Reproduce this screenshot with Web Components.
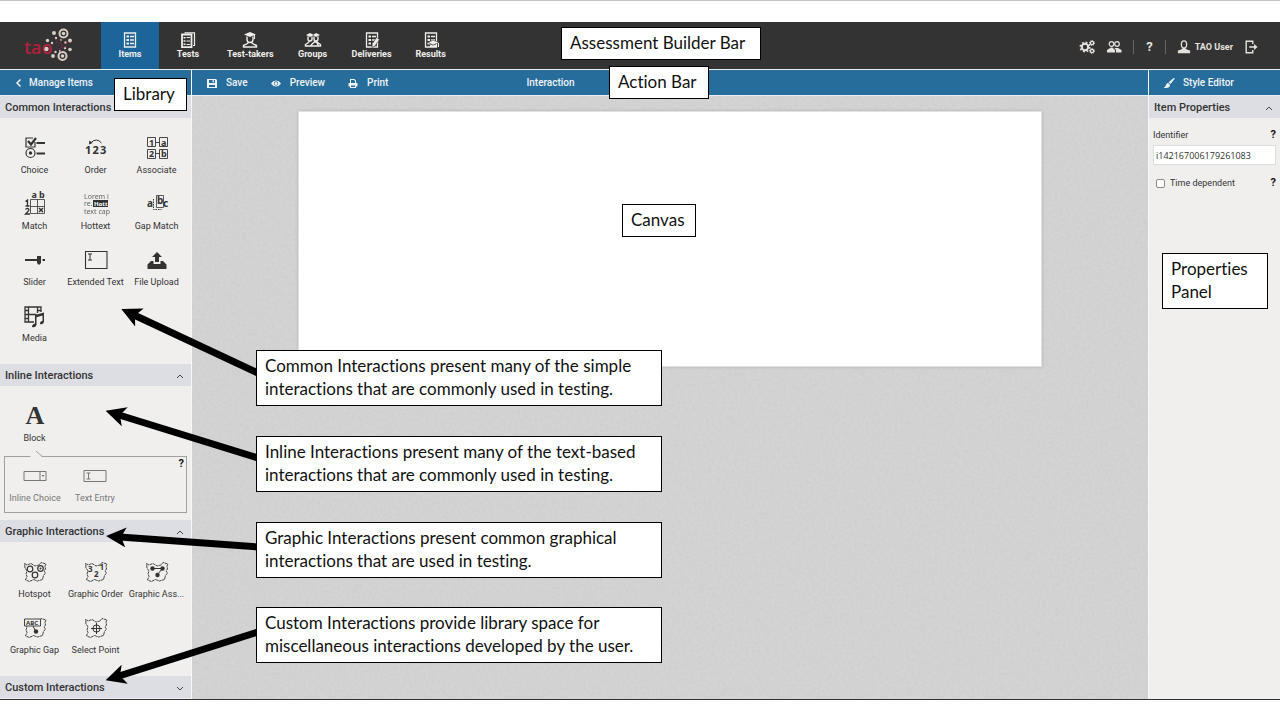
<!DOCTYPE html>
<html lang="en">
<head>
<meta charset="utf-8">
<title>TAO Item Authoring</title>
<style>
  html { background: #fff; }
  body { margin: 0; font: 9px/12px Roboto, "Liberation Sans", sans-serif; color: #333; }
</style>
</head>
<body>
<tao-app></tao-app>

<template id="app-template">
  <style>
    :host { display: block; position: relative; border-top: 1px solid #c4c4c4; }
    * { box-sizing: border-box; }
    a, button { font: inherit; color: inherit; text-decoration: none; background: none; border: 0; padding: 0; cursor: pointer; }
    .shell { margin-top: 21px; border-bottom: 1px solid #333; }
    .top { display: flex; align-items: stretch; height: 47px; background: #333; color: #e6e2dd; }
    .logo { width: 101px; display: block; }
    .logo svg { display: block; }
    nav { display: flex; flex: 1; }
    .tools { display: flex; align-items: center; gap: 11px; padding: 2px 22px 0 0; font-weight: 700; }
    .tools button, .user { display: flex; align-items: center; gap: 4px; }
    .tools .sep { width: 1px; height: 14px; background: #666; }
    .help { font-size: 13px; padding: 0 1px; }
    .main { display: grid; grid-template-columns: 191px minmax(0, 1fr) 131px; column-gap: 1px; background: #f8f8f8; }
    .bar { display: flex; align-items: center; height: 27px; padding-top: 1px; background: #266d9c; color: #f0f3f5; border: solid #e8eef2; border-width: 1px 0; font-size: 10px; font-weight: 500; }
    .bar button { display: flex; align-items: center; }
    .bar.left { padding-left: 15px; }
    .bar.left button { gap: 6px; }
    .bar.mid { padding-left: 14px; gap: 22px; }
    .bar.mid button { gap: 8px; }
    .bar .context { margin-left: 116px; }
    .bar.right { padding-left: 14px; }
    .bar.right button { gap: 8px; }
    .lib, .props { background: #f0efee; }
    .lib { padding-bottom: 1px; }
    .stage { position: relative; background: #d3d3d3; padding: 15px 106px; }
    .grain { position: absolute; inset: 0; width: 100%; height: 100%; }
    .canvas { position: relative; height: 256px; background: #fff; border: 1px solid #e4e0e0; box-shadow: 0 0 3px #b4b0b0; }
    .form { padding: 11px 4px 0 4px; }
    .row { display: flex; justify-content: space-between; align-items: center; }
    .row b { font-size: 11px; color: #111; }
    input[type=text] { display: block; width: 100%; height: 20px; margin: 4px 0 12px; padding: 0 2px; border: 1px solid #dedcda; background: #fff; color: #333; font: 9px "Open Sans", sans-serif; }
    .check { display: flex; align-items: center; gap: 5px; margin-left: 3px; }
    input[type=checkbox] { appearance: none; width: 9px; height: 9px; margin: 0; border: 1px solid #888; border-radius: 2px; background: #fff; }
    .arrows { position: absolute; left: 0; top: -1px; pointer-events: none; }
  </style>
  <div class="shell">
    <header class="top">
      <a class="logo" href="#" aria-label="tao">
        <svg width="101" height="47" viewBox="0 22 101 47">
          <text x="24" y="54" font-family="Open Sans" font-size="18" font-weight="600" fill="#b5203c">tao</text>
          <g fill="none" stroke="#d8cec4" stroke-width="2"><circle cx="63.500" cy="33.500" r="4"/><circle cx="62.500" cy="56" r="4"/></g>
          <g fill="#d8cec4"><circle cx="63.500" cy="33.500" r="1.800"/><circle cx="62.500" cy="56" r="1.800"/><circle cx="46.500" cy="49" r="2.200"/><circle cx="54" cy="33" r="2"/><circle cx="70" cy="40.500" r="2"/><circle cx="70" cy="49.500" r="1.800"/><circle cx="47.500" cy="40.500" r="1.700"/><circle cx="53" cy="56" r="1.900"/><circle cx="56" cy="38" r="1.200"/><circle cx="65.500" cy="42.500" r="1.200"/><circle cx="65" cy="48" r="1.200"/><circle cx="55.500" cy="52" r="1.200"/><circle cx="52" cy="43" r="1.200"/><circle cx="61" cy="40" r="1"/><circle cx="60" cy="51" r="1"/></g>
          <g stroke="#a52842" stroke-width="1" stroke-dasharray="1.500 1.500"><path d="M58 46 62 39M59 48l3 5M61 45l7-3M57 43l-2-5M61 47h6"/></g>
        </svg>
      </a>
      <nav>
        <tao-nav-item icon="items" active>Items</tao-nav-item>
        <tao-nav-item icon="tests">Tests</tao-nav-item>
        <tao-nav-item icon="taker">Test-takers</tao-nav-item>
        <tao-nav-item icon="groups">Groups</tao-nav-item>
        <tao-nav-item icon="deliveries">Deliveries</tao-nav-item>
        <tao-nav-item icon="results">Results</tao-nav-item>
      </nav>
      <div class="tools">
        <button aria-label="Settings"><tao-icon name="gears" size="16"></tao-icon></button>
        <button aria-label="Users"><tao-icon name="users" size="16"></tao-icon></button>
        <span class="sep"></span>
        <button class="help">?</button>
        <span class="sep"></span>
        <a class="user" href="#"><tao-icon name="user" size="14"></tao-icon>TAO User</a>
        <button aria-label="Log out"><tao-icon name="exit" size="14"></tao-icon></button>
      </div>
    </header>
    <div class="main">
      <div class="bar left"><button><tao-icon name="back" size="8"></tao-icon>Manage Items</button></div>
      <div class="bar mid">
        <button><tao-icon name="save" size="12"></tao-icon>Save</button>
        <button><tao-icon name="eye" size="12"></tao-icon>Preview</button>
        <button><tao-icon name="print" size="12"></tao-icon>Print</button>
        <span class="context">Interaction</span>
      </div>
      <div class="bar right"><button><tao-icon name="brush" size="12"></tao-icon>Style Editor</button></div>
      <aside class="lib">
        <tao-section heading="Common Interactions" open>
          <tao-interaction icon="choice">Choice</tao-interaction>
          <tao-interaction icon="order">Order</tao-interaction>
          <tao-interaction icon="associate">Associate</tao-interaction>
          <tao-interaction icon="match">Match</tao-interaction>
          <tao-interaction icon="hottext">Hottext</tao-interaction>
          <tao-interaction icon="gap">Gap Match</tao-interaction>
          <tao-interaction icon="slider">Slider</tao-interaction>
          <tao-interaction icon="extended">Extended Text</tao-interaction>
          <tao-interaction icon="upload">File Upload</tao-interaction>
          <tao-interaction icon="media">Media</tao-interaction>
        </tao-section>
        <tao-section heading="Inline Interactions" open>
          <tao-interaction icon="block">Block</tao-interaction>
          <tao-subgroup slot="extra">
            <tao-interaction icon="inline">Inline Choice</tao-interaction>
            <tao-interaction icon="entry">Text Entry</tao-interaction>
          </tao-subgroup>
        </tao-section>
        <tao-section heading="Graphic Interactions" open>
          <tao-interaction icon="hotspot">Hotspot</tao-interaction>
          <tao-interaction icon="gorder">Graphic Order</tao-interaction>
          <tao-interaction icon="gassoc">Graphic Ass...</tao-interaction>
          <tao-interaction icon="ggap">Graphic Gap</tao-interaction>
          <tao-interaction icon="point">Select Point</tao-interaction>
        </tao-section>
        <tao-section heading="Custom Interactions"></tao-section>
      </aside>
      <main class="stage">
        <svg class="grain" aria-hidden="true">
          <filter id="paper" x="0" y="0" width="100%" height="100%">
            <feTurbulence type="fractalNoise" baseFrequency="0.35" numOctaves="2" seed="4"/>
            <feColorMatrix values="0 0 0 0 0.5  0 0 0 0 0.5  0 0 0 0 0.5  0.5 0 0 0 -0.2"/>
          </filter>
          <rect width="100%" height="100%" filter="url(#paper)"/>
        </svg>
        <div class="canvas"></div>
      </main>
      <aside class="props">
        <tao-section heading="Item Properties" open bare>
          <div class="form" slot="form">
            <div class="row"><label for="ident">Identifier</label><b>?</b></div>
            <input type="text" id="ident" value="i142167006179261083">
            <div class="row"><span class="check"><input type="checkbox" id="timed"><label for="timed">Time dependent</label></span><b>?</b></div>
          </div>
        </tao-section>
      </aside>
    </div>
  </div>
  <svg class="arrows" width="260" height="700" aria-hidden="true">
    <marker id="head" markerUnits="userSpaceOnUse" markerWidth="20" markerHeight="20" refX="6" refY="10" orient="auto"><path d="M20 10 0 0 5 10 0 20z"/></marker>
    <g stroke="#000" stroke-width="7">
      <path marker-end="url(#head)" d="M258 373 134 315"/>
      <path marker-end="url(#head)" d="M258 458 119 415"/>
      <path marker-end="url(#head)" d="M258 547 120 537"/>
      <path marker-end="url(#head)" d="M258 632 119 676"/>
    </g>
  </svg>
  <tour-note style="--x:561px;--y:26px;--w:200px">Assessment Builder Bar</tour-note>
  <tour-note style="--x:609px;--y:65px;--w:100px">Action Bar</tour-note>
  <tour-note style="--x:114px;--y:77px;--w:73px">Library</tour-note>
  <tour-note style="--x:622px;--y:203px;--w:74px">Canvas</tour-note>
  <tour-note style="--x:1162px;--y:252px;--w:106px">Properties<br>Panel</tour-note>
  <tour-note style="--x:256px;--y:349px;--w:406px">Common Interactions present many of the simple<br>interactions that are commonly used in testing.</tour-note>
  <tour-note style="--x:256px;--y:435px;--w:406px">Inline Interactions present many of the text-based<br>interactions that are commonly used in testing.</tour-note>
  <tour-note style="--x:256px;--y:521px;--w:406px">Graphic Interactions present common graphical<br>interactions that are used in testing.</tour-note>
  <tour-note style="--x:256px;--y:606px;--w:406px">Custom Interactions provide library space for<br>miscellaneous interactions developed by the user.</tour-note>
</template>

<script>
const MAP = '<path d="M1.500 3.500l2.500 1.500 4-1.500 4 2.500 4-1 2-2.500 5 1.500-1 2 .5 3-1.500 2 1.500 2-2 2.500-1 4-5 1.500-4-1.500-4 2-4-1.500 1.500-3.500-1-2.500 1-3-2-3z" fill="none" stroke="currentColor" stroke-width=".9" stroke-dasharray="3 .5"/>';
const SHEET = '<path d="M2.500 1h11v14h-11z" fill="none" stroke="currentColor" stroke-width="1.300"/><path d="M4.500 3.500h2.500v2h-2.500zM4.500 7h2.500v2h-2.500zM4.500 10.500h2.500v2h-2.500z"/><path d="M8 4.500h4M8 8h4M8 11.500h4" stroke="currentColor" stroke-width="1.300"/>';
const T = (x, y, s, t) => `<text x="${x}" y="${y}" font-family="Noto Sans" font-weight="700" font-size="${s}">${t}</text>`;
const ICONS = {
  items: [16, SHEET],
  tests: [16, '<path d="M4.500 .800h10v12.700H13" fill="none" stroke="currentColor" stroke-width="1.200"/><path d="M2 2.500h9.500v12.700H2z" fill="none" stroke="currentColor" stroke-width="1.800"/><path d="M3.500 5h2v1.500h-2zM3.500 8.200h2v1.500h-2zM3.500 11.500h2V13h-2z"/><path d="M6.500 5.500H10M6.500 9H10M6.500 12.500H10" stroke="currentColor"/>'],
  taker: [16, '<path d="M8 0l6 2.500L8 5 2 2.500zM13 3v4h-1V3z"/><path d="M5 4.500v3q0 3 3 3t3-3v-3" fill="none" stroke="currentColor" stroke-width="1.400"/><path d="M6.500 10q0 1.500-5 3.500v1.500h13v-1.500q-5-2-5-3.500" fill="none" stroke="currentColor" stroke-width="1.400"/>'],
  groups: [16, '<path d="M5 1l4 2-4 2-4-2zM11 1l4 2-4 2-3-2z"/><g fill="none" stroke="currentColor" stroke-width="1.400"><path d="M3 4.500V7q0 2 2 2t2-2V4.500M9 4.500V7q0 2 2 2t2-2V4.500M4 9.500q0 1-3.500 3V14H8M12 9.500q0 1 3.500 3V14H12M7.500 11.500l2-1.500h2l2 4H5.500z"/></g>'],
  deliveries: [16, SHEET + '<path d="M12.500 5.500l3 2-4.500 6.500-3 1.500.2-3.500z" stroke="#333" stroke-width=".6"/>'],
  results: [16, SHEET + '<path d="M10 8l6 2.500-6 2.500-5-2.500z" stroke="#333" stroke-width=".5"/><path d="M7 12.500v2.500h6v-2.500l-3 1zM15 11h1v4h-1z"/>'],
  gears: [16, '<g fill="none" stroke="currentColor"><circle cx="6" cy="8" r="3.200" stroke-width="2"/><circle cx="6" cy="8" r="4.800" stroke-width="1.500" stroke-dasharray="1.900 1.870"/><circle cx="13" cy="4" r="1.600" stroke-width="1.300"/><circle cx="13" cy="4" r="2.500" stroke-dasharray="1 .96"/><circle cx="13" cy="12" r="1.600" stroke-width="1.300"/><circle cx="13" cy="12" r="2.500" stroke-dasharray="1 .96"/></g>'],
  users: [16, '<g fill="none" stroke="currentColor" stroke-width="1.200"><circle cx="5.500" cy="5" r="2.300"/><circle cx="11" cy="5" r="2.300"/></g><path d="M1 13.500V11l4-2.500h1.500L9 11v2.500zM10 13.500V11L8.500 9h3.500l3.500 2v2.500z"/>'],
  user: [16, '<ellipse cx="8" cy="5" rx="3" ry="4" fill="none" stroke="currentColor" stroke-width="1.500"/><path d="M6.500 9h3q0 1.500 5.500 3v3H1v-3q5.500-1.500 5.500-3z"/>'],
  exit: [16, '<path d="M10 4.500V1.500H2.500v13H10v-3" fill="none" stroke="currentColor" stroke-width="1.600"/><path d="M6 7.200h5.500V4.500L15.500 8l-4 3.500V8.800H6z"/>'],
  back: [8, '<path d="M5.500 0.500 2 4l3.500 3.500" fill="none" stroke="currentColor" stroke-width="1.500"/>'],
  save: [12, '<path fill-rule="evenodd" d="M1 2h9l1 1v8H1zM3 3v3h6V3zM3 8v2h6V8z"/><path d="M6.500 3.200h1.500v2H6.500z"/>'],
  eye: [12, '<path fill-rule="evenodd" d="M1 6.500Q3 3.500 6 3.500t5 3Q9 9.500 6 9.500T1 6.500zM6 4.300a2.200 2.200 0 1 0 .01 0z"/><circle cx="6" cy="6.500" r="1.500"/>'],
  print: [12, '<path fill-rule="evenodd" d="M3 2h4.500L9 3.500V6h1.500v3.500H9V11H3V9.500H1.500V6H3zM4 3v3h4V4L7 3zM4 8.500V10h4V8.500z"/>'],
  brush: [12, '<path d="M11.500 1Q12 1 11.500 2L7.500 7 5.500 5.500 10 1.500zM5 6l2 1.700Q7 11 3 11H.500Q2.500 10 3 8 3.500 6 5 6z"/>'],
  up: [8, '<path d="M1 6l3-3 3 3" fill="none" stroke="currentColor" stroke-width=".9"/>'],
  down: [8, '<path d="M1 3l3 3 3-3" fill="none" stroke="currentColor" stroke-width=".9"/>'],
  choice: [24, '<path d="M12 6v5H3V2h7" fill="none" stroke="currentColor" stroke-width="1.200"/><path d="M5 5l3 3.500L13 2" fill="none" stroke="currentColor" stroke-width="2.200"/><circle cx="7.500" cy="17" r="4.500" fill="none" stroke="currentColor" stroke-width="1.200"/><circle cx="7.500" cy="17" r="1.700"/><path d="M13.500 7H22M13.500 17.500H22" stroke="currentColor" stroke-width="2"/>'],
  order: [24, T(1, 18, 11, '1') + T(8.500, 18, 11, '2') + T(16, 18, 11, '3') + '<path d="M6.500 7q6-6 11 0" fill="none" stroke="currentColor"/><path d="M5 8.500l.3-4 3.500 2.500z"/>'],
  associate: [24, '<g fill="none" stroke="currentColor" stroke-width=".9"><path d="M2.500 1.500h8v9h-8zM14.500 1.500h8v9h-8zM2.500 13.500h8v9h-8zM14.500 13.500h8v9h-8zM10.500 6.500h4M10.500 17.500h4"/></g>' + T(4, 9.500, 9, '1') + T(16, 9.500, 9, 'a') + T(4, 21, 9, '2') + T(16, 21, 9, 'b')],
  match: [24, '<path d="M7.500 7.500h14v14h-14zM14.500 7.500v14M7.500 14.500h14" fill="none" stroke="currentColor" stroke-width=".8"/>' + T(8.500, 6, 9, 'a') + T(16, 6, 9, 'b') + '<g stroke="currentColor" stroke-width="1.300" fill="none"><path d="M2.500 9.500 4.500 8v6M2.500 14h4M2.500 17.500q.5-1.200 2-1.200 3 .7 0 3.700l-2 2h4.500"/></g><path d="M16 16l4 4M20 16l-4 4" stroke="currentColor" stroke-width="1.500"/>'],
  hottext: [24, '<path d="M9 8H24v7H9z"/><g opacity=".75" font-family="Noto Sans" font-size="7"><text x="0" y="6.500">Lorem i</text><text x="0" y="14">re.</text><text x="0" y="22">text cap</text></g><text x="10" y="14" font-family="Noto Sans" font-weight="700" font-size="6" fill="#fff">Hott</text>'],
  gap: [24, '<path d="M11.500 3.500h7v12h-7z" fill="none" stroke="currentColor" stroke-width=".8"/><path d="M8.500 7v10.500h8" fill="none" stroke="currentColor" stroke-dasharray="1.500 1"/>' + T(2, 15, 10, 'a') + T(12, 12, 10, 'b') + T(18, 15, 10, 'c')],
  slider: [24, '<path d="M2 12h13M20 12h2" stroke="currentColor" stroke-width="1.800"/><path d="M14 8h4v7l-2 2-2-2z"/><path d="M19.500 12h2.500" stroke="currentColor" stroke-width="2"/>'],
  extended: [24, '<path d="M1.500 3.500h21.500v17H1.500z" fill="none" stroke="currentColor" stroke-width="1.100"/><path d="M4 6h4M6 6v6M4 12h4" stroke="currentColor" fill="none"/>'],
  upload: [24, '<path d="M12 4l5 5h-3v5h-4V9H7zM6 13h2.500v3h7v-3H18l3.500 3.500V21h-19v-4.500z"/>'],
  media: [24, '<g fill="none" stroke="currentColor" stroke-width="1.300"><path d="M11 18H2V3h16v5M5.500 3v15M14.500 3v6M5.500 10.500h8M2 6.500h3.500M2 10.500h3.500M2 14.500h3.500M14.500 6.500H18"/></g><path d="M12 11l9-2.500V18q-1 3-4 2 0-3 2.500-3v-5.500l-6 1.700V21q-1 3-4.500 2 0-3 3-3.500z"/>'],
  block: [24, '<text x="12" y="20" text-anchor="middle" font-family="Liberation Serif" font-weight="700" font-size="26">A</text>'],
  inline: [24, '<path d="M1 7.500h22v9H1zM17 7.500v9" fill="none" stroke="currentColor"/><path d="M18.500 11h3L20 13z"/>'],
  entry: [24, '<path d="M1 6.500h22v11H1z" fill="none" stroke="currentColor"/><path d="M3.500 9h4M5.500 9v6M3.500 15h4" stroke="currentColor"/>'],
  hotspot: [24, MAP + '<g fill="none" stroke="currentColor" stroke-width="1.200"><circle cx="7" cy="9" r="2.800"/><circle cx="17.500" cy="8.500" r="2.800"/><circle cx="12" cy="15" r="2.800"/></g><circle cx="17.500" cy="8.500" r="1"/>'],
  gorder: [24, MAP + T(4, 12, 8, '3') + T(10, 17, 8, '2') + T(15.500, 10, 8, '1')],
  gassoc: [24, MAP + '<path d="M7.500 8.500h10l-5 6" fill="none" stroke="currentColor"/><circle cx="7.500" cy="8.500" r="2.200"/><circle cx="17.500" cy="8.500" r="2.200"/><circle cx="12.500" cy="15" r="2.200"/>'],
  ggap: [24, MAP + '<path d="M1.500 3h16v7h-16z" fill="#f0efee" stroke="currentColor" stroke-width=".9"/><path d="M10 10l2.500 5" stroke="currentColor"/><circle cx="13" cy="15.500" r="2.200"/>' + T(3, 9, 6, 'ABC')],
  point: [24, MAP + '<circle cx="12.500" cy="12.500" r="3.600" fill="none" stroke="currentColor"/><path d="M12.500 7v11M7 12.500h11" stroke="currentColor"/>'],
};

class TaoIcon extends HTMLElement {
  connectedCallback() {
    const size = this.getAttribute('size') || 24;
    const [box, art] = ICONS[this.getAttribute('name')];
    this.attachShadow({ mode: 'open' }).innerHTML = `
      <style>:host { display: block; flex: none; } svg { display: block; fill: currentColor; overflow: visible; }</style>
      <svg width="${size}" height="${size}" viewBox="0 0 ${box} ${box}" aria-hidden="true">${art}</svg>`;
  }
}

class TaoNavItem extends HTMLElement {
  connectedCallback() {
    this.attachShadow({ mode: 'open' }).innerHTML = `
      <style>
        :host { display: block; }
        :host([active]) { background: #1b659b; }
        a { box-sizing: border-box; height: 100%; min-width: 58px; padding: 10px 10px 0; display: flex; flex-direction: column; align-items: center; color: #f0eeea; text-decoration: none; font-weight: 700; }
      </style>
      <a href="#"><tao-icon name="${this.getAttribute('icon')}" size="16"></tao-icon><span><slot></slot></span></a>`;
  }
}

class TaoSection extends HTMLElement {
  connectedCallback() {
    const open = this.hasAttribute('open');
    const body = this.hasAttribute('bare')
      ? '<slot name="form"></slot>'
      : '<div class="body"><div class="grid"><slot></slot></div><slot name="extra"></slot></div>';
    this.attachShadow({ mode: 'open' }).innerHTML = `
      <style>
        :host { display: block; }
        h2 { margin: 0; }
        h2 button { box-sizing: border-box; display: flex; width: 100%; height: 22px; align-items: center; justify-content: space-between; padding: 1px 7px 0 5px; border: 0; background: #dcdee3; color: #333; font: 500 11px/14px Roboto, sans-serif; text-align: left; }
        .body { padding: 18px 4px 0; }
        .grid { display: grid; grid-template-columns: repeat(3, 61px); row-gap: 16px; padding-bottom: 20px; }
        ::slotted(tao-subgroup) { margin: -8px 0 7px; }
      </style>
      <h2><button aria-expanded="${open}">${this.getAttribute('heading')}<tao-icon name="${open ? 'up' : 'down'}" size="8"></tao-icon></button></h2>
      ${open ? body : ''}`;
  }
}

class TaoSubgroup extends HTMLElement {
  connectedCallback() {
    this.attachShadow({ mode: 'open' }).innerHTML = `
      <style>
        :host { display: block; box-sizing: border-box; position: relative; height: 57px; border: 1px solid #a0a0a0; padding-top: 7px; color: #777; }
        .grid { display: grid; grid-template-columns: repeat(3, 60px); }
        b { position: absolute; right: 2px; top: 1px; font-size: 11px; color: #111; }
        svg { position: absolute; left: 23px; top: -7px; }
      </style>
      <svg width="16" height="8"><path d="M1 8 8 1l7 7z" fill="#f0efee"/><path d="M8 1l7 6" stroke="#a0a0a0"/></svg>
      <div class="grid"><slot></slot></div><b>?</b>`;
  }
}

class TaoInteraction extends HTMLElement {
  connectedCallback() {
    this.attachShadow({ mode: 'open' }).innerHTML = `
      <style>
        :host { display: flex; flex-direction: column; align-items: center; gap: 4px; min-width: 0; white-space: nowrap; }
      </style>
      <tao-icon name="${this.getAttribute('icon')}"></tao-icon><span><slot></slot></span>`;
  }
}

class TourNote extends HTMLElement {
  connectedCallback() {
    this.attachShadow({ mode: 'open' }).innerHTML = `
      <style>
        :host { position: absolute; left: var(--x); top: var(--y); width: var(--w); box-sizing: border-box; padding: 3px 0 5px 8px; border: 1px solid #000; background: #fff; color: #111; font: 17px/23px Lato, sans-serif; font-variant-ligatures: none; white-space: nowrap; }
      </style>
      <slot></slot>`;
  }
}

class TaoApp extends HTMLElement {
  connectedCallback() {
    this.attachShadow({ mode: 'open' }).append(document.getElementById('app-template').content.cloneNode(true));
  }
}

customElements.define('tao-icon', TaoIcon);
customElements.define('tao-nav-item', TaoNavItem);
customElements.define('tao-section', TaoSection);
customElements.define('tao-subgroup', TaoSubgroup);
customElements.define('tao-interaction', TaoInteraction);
customElements.define('tour-note', TourNote);
customElements.define('tao-app', TaoApp);
</script>
</body>
</html>
